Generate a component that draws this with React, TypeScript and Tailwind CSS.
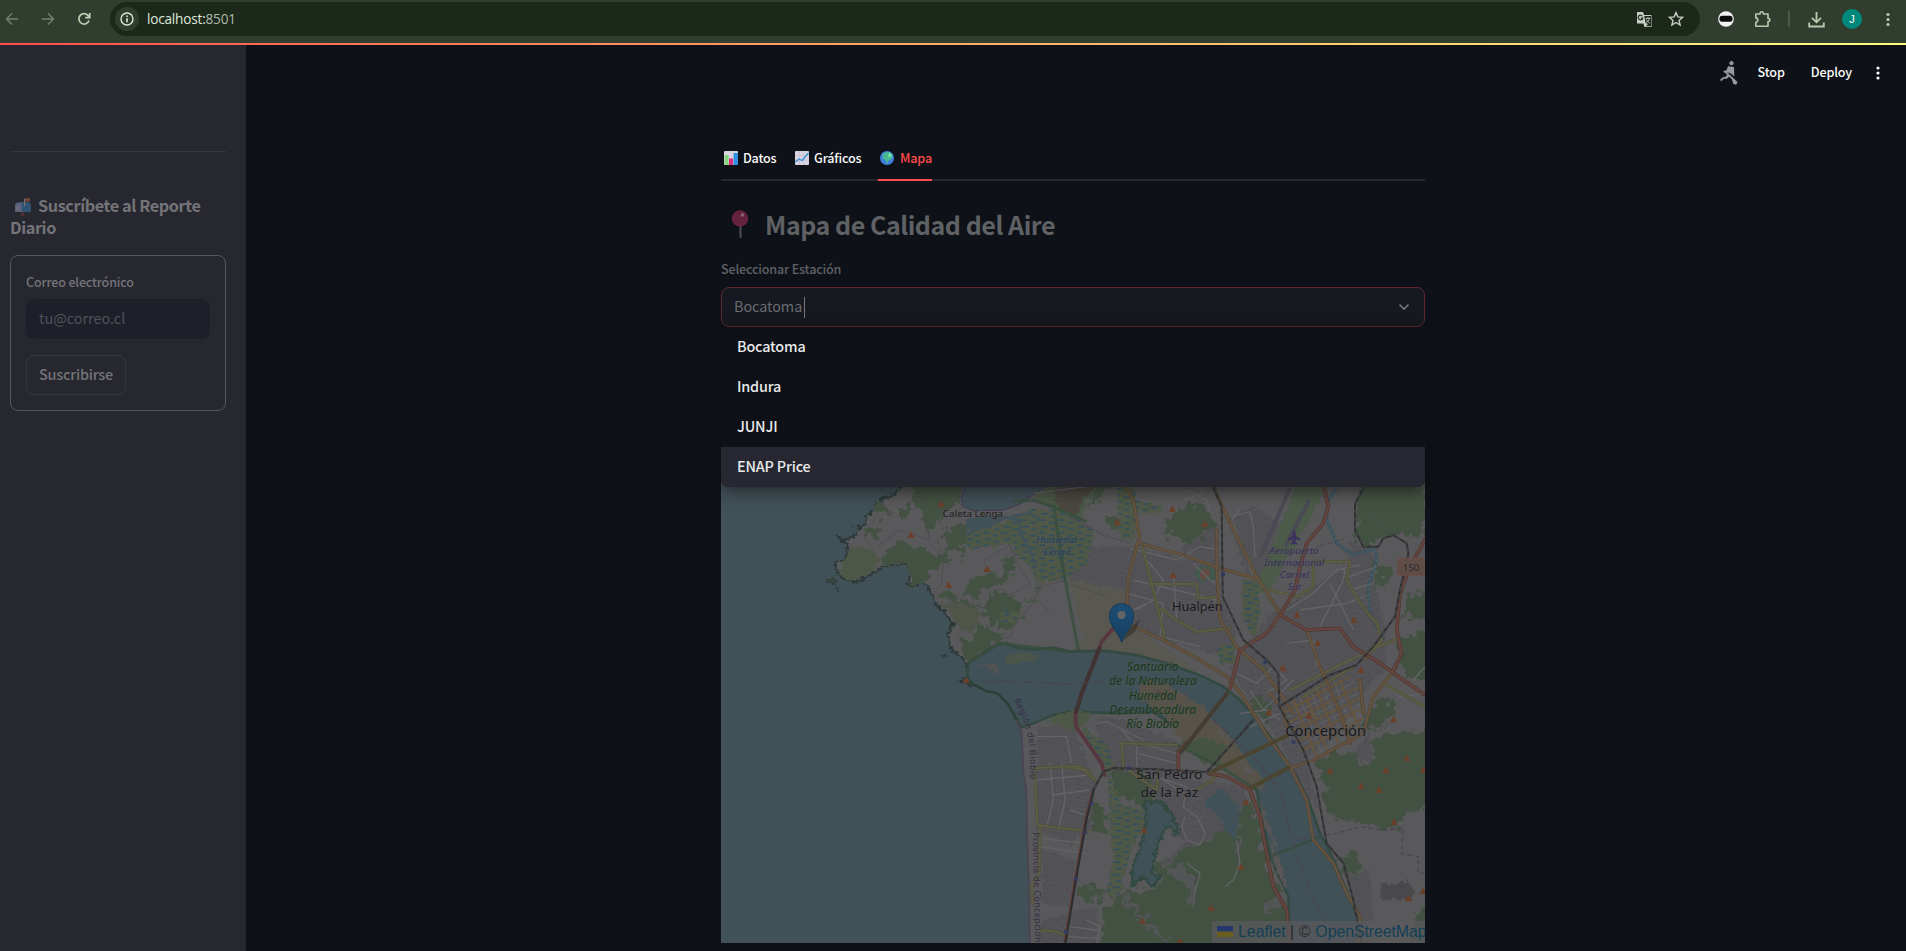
import React from "react";

const SANS = "font-['Noto_Sans_CJK_SC','Noto_Sans',sans-serif]";

type Pt = [number, number];

const PEAKS: Pt[] = [
  [663, 72], [573, 165], [801, 267], [686, 315], [738, 601], [1192, 126], [1357, 87], [1455, 132], [1359, 285],
  [1731, 405], [1902, 420], [1793, 489], [1689, 564], [1923, 570], [1647, 697], [1767, 708], [2021, 718],
  [2060, 834], [1998, 870], [1830, 873], [1923, 918], [1977, 930], [2110, 870], [2022, 1026], [1578, 966],
  [1272, 1050], [1563, 1161], [1473, 1284], [1268, 1323], [1380, 1384], [2066, 1254], [2110, 1233],
];

const FOREST = [
  "M543 10 L735 10 L722 75 L700 70 L690 95 L640 130 L625 165 L612 130 L605 90 L580 60 L590 30Z",
  "M738 120 L740 190 L700 200 L660 180 L690 140Z",
  "M500 215 L540 180 L570 195 L620 200 L650 225 L680 225 L685 245 L650 270 L600 305 L570 318 L575 270 L540 250 L480 262Z",
  "M655 205 L690 195 L735 205 L730 222 L680 222Z",
  "M845 235 L880 232 L885 290 L850 310 L820 285 L855 270Z",
  "M745 320 L775 290 L820 285 L840 310 L790 330 L775 355 L740 345Z",
  "M650 345 L690 335 L710 360 L790 380 L830 330 L880 340 L905 375 L900 430 L850 440 L810 420 L790 390 L720 375Z",
  "M770 440 L810 430 L830 470 L850 460 L835 485 L790 515 L750 540 L725 510 L720 470 L750 490Z",
  "M455 85 L490 70 L510 100 L470 115Z", "M430 150 L475 140 L480 160 L440 170Z", "M530 95 L570 60 L580 80 L545 120Z",
  "M720 235l18 4-6 8z", "M960 310l10 30-12 8z", "M915 350l36 4-4 8-30-2z",
  "M1350 100 L1400 80 L1450 80 L1470 110 L1490 140 L1445 170 L1430 195 L1380 165 L1330 170Z",
  "M1160 110 L1210 100 L1225 140 L1180 150Z",
  "M1140 10 L1180 10 L1150 50 L1100 85Z",
  "M1910 40 L1940 10 L2115 10 L2115 165 L2060 170 L2000 160 L1960 190 L1930 205 L1905 160Z",
  "M1970 250 L2010 270 L1990 330 L1960 300Z",
  "M2060 350 L2130 335 L2130 430 L2080 400 L2050 410Z", "M2030 480 L2130 450 L2130 600 L2060 590 L2040 530Z",
  "M1600 640 L1660 670 L1640 720 L1590 690Z", "M1960 670 L2010 650 L2020 700 L1980 740 L1930 760Z",
  "M1780 850 L1850 820 L1900 800 L1920 860 L1960 840 L1960 790 L2000 740 L2040 760 L2140 740 L2140 970 L2060 1000 L2020 1050 L1960 1040 L1890 1020 L1840 1010 L1800 970 L1830 930Z",
  "M1380 1110 L1470 1080 L1550 1000 L1590 950 L1620 1050 L1640 1150 L1690 1240 L1710 1320 L1710 1420 L1150 1420 L1150 1290 L1220 1220 L1260 1250 L1320 1200 L1300 1140 L1330 1150Z",
  "M1180 870 L1280 880 L1310 960 L1280 1000 L1240 960 L1180 960Z",
  "M1120 980 L1155 980 L1150 1060 L1120 1060Z", "M1080 1220 L1160 1230 L1150 1260 L1070 1250Z",
  "M1860 1130 L1910 1120 L1920 1160 L1900 1190 L1870 1180Z", "M2090 1300 L2130 1250 L2130 1400 L2060 1400Z",
];

const CLEARINGS = [
  "M1550 1010l12 50-8 60-10 0 4-60-8-50z", "M1210 1230l20 20 60 70-8 6-70-60z",
  "M1330 1140l80 40 20 30-10 60-10 0 0-50-60-30z", "M1630 1270l60-20 10 20-60 20z", "M1250 1320l60 20 40 50-10 2-40-40-50-24z",
];

const WETLAND = [
  "M738 150 L800 145 L870 120 L940 85 L1010 90 L1080 120 L1120 150 L1105 250 L1050 290 L1000 300 L950 305 L930 260 L885 225 L880 190 L810 200 L742 210Z",
  "M1190 15 L1240 15 L1250 60 L1330 80 L1320 100 L1250 100 L1240 190 L1200 170Z",
  "M1565 300 L1610 300 L1620 400 L1600 470 L1570 420Z",
  "M1490 500 L1540 490 L1550 550 L1500 555Z",
  "M840 400 L905 395 L880 430 L845 430Z",
  "M1160 790 L1180 850 L1170 890 L1200 970 L1270 990 L1270 1040 L1240 1100 L1220 1160 L1200 1240 L1175 1260 L1160 1230 L1180 1140 L1170 1040Z",
  "M1070 690 L1110 760 L1160 790 L1170 870 L1140 860 L1100 780Z",
];

const URBAN = [
  "M1225 200 L1500 260 L1480 300 L1550 460 L1520 530 L1330 480 L1220 430 L1215 300Z",
  "M1520 110 L1600 80 L1680 130 L1620 290 L1580 280Z",
  "M1380 210 L1490 130 L1500 260Z",
  "M1090 200 L1240 200 L1215 330 L1050 300Z",
  "M1650 400 L1760 340 L1880 250 L1960 300 L1990 420 L2000 560 L1960 600 L1850 770 L1720 860 L1680 780 L1610 700 L1530 560Z",
  "M1890 180 L1960 220 L1950 420 L1880 330Z",
  "M1120 710 L1200 720 L1380 790 L1380 870 L1450 930 L1460 1040 L1400 1090 L1350 1060 L1330 1000 L1270 900 L1160 860Z",
  "M950 740 L1060 740 L1110 870 L1100 960 L1060 1100 L955 1050Z",
  "M965 1110 L1070 1140 L1050 1280 L965 1270Z", "M960 1320 L1130 1280 L1130 1389 L960 1389Z",
  "M1050 900 L1130 900 L1110 1060 L1060 1060Z", "M1420 900 L1570 920 L1590 1000 L1560 1010 L1480 1080 L1420 1150 L1330 1150 L1400 1090Z",
  "M1880 1180 L1950 1170 L1960 1330 L1920 1330Z", "M1990 1210 L2080 1220 L2070 1260 L1990 1260Z",
  "M1890 830 L1950 760 L1960 850Z", "M1640 680 L1700 680 L1760 860 L1800 990 L1770 960 L1700 830Z",
];

const STREETS = [
  "M1230 205 L1370 240 L1440 200 L1500 210", "M1240 300 L1490 360", "M1220 340 L1330 370 L1320 470 L1440 500", "M1280 240 L1330 300 L1300 360 L1250 390",
  "M1360 280 L1370 420 L1450 460", "M1420 250 L1480 310", "M1220 400 L1280 370", "M1440 390 L1510 350 L1480 300",
  "M1530 110 L1590 95 L1600 140 L1605 230", "M1540 130 L1600 290", "M1700 390 L1780 340 L1850 270 L1920 255", "M1740 390 L1880 370 L1930 350",
  "M1800 440 L1870 300 L1880 240", "M1830 310 L1900 450", "M1550 580 L1610 610 L1660 560 L1700 600 L1640 640", "M1590 630 L1630 690 L1720 600",
  "M1700 490 L1780 480 L1790 560", "M1130 730 L1160 725 L1270 780", "M1260 790 L1370 820", "M1255 820 L1370 850", "M1205 750 L1250 800 L1250 860",
  "M1270 880 L1400 920 L1390 980 L1430 1010 L1455 1060 L1440 1095 L1400 1080 L1385 1040 L1395 1010", "M1330 900 L1390 940",
  "M950 770 L1040 770 L1055 850", "M990 850 L1000 960 L980 1040", "M1025 850 L1035 960 L1015 1050", "M950 900 L1110 885", "M995 945 L1110 930",
  "M960 1075 L1100 1090", "M960 1100 L1100 1120", "M1050 990 L1110 1010", "M1550 1080 L1560 1150 L1540 1200 L1515 1220",
  "M1100 1320 L1140 1340 L1130 1389", "M1050 1340 L1130 1350", "M1040 1370 L1130 1375", "M1400 1150 L1440 1180 L1420 1255",
  "M940 40 L1100 20 L1160 15", "M1890 330 L1960 310", "M1970 260 L1890 290 L1860 260",
  "M1400 30 L1460 60 L1470 90", "M1390 60 L1450 40 L1440 15", "M1560 90 L1520 140", "M2080 600 L2115 560", "M1990 610 L2040 650 L2115 640",
  "M1560 700 L1640 690 L1680 720", "M1590 740 L1680 700",
];

const CITY = [
  "M1690 700 L1890 590", "M1700 730 L1920 620", "M1715 755 L1930 650", "M1730 785 L1935 680", "M1740 815 L1930 715",
  "M1720 660 L1790 830", "M1755 640 L1820 810", "M1790 625 L1855 790", "M1825 610 L1885 770", "M1860 600 L1920 750",
];

const CITY_MINOR = [
  "M1695 715 L1905 605", "M1708 742 L1925 635", "M1722 770 L1932 665", "M1735 800 L1932 698",
  "M1738 650 L1805 820", "M1772 632 L1838 800", "M1808 618 L1870 780", "M1842 605 L1902 760",
];

const YELLOW = [
  "M1265 190 L1335 475", "M1290 312 L1430 312 L1435 355 L1495 350", "M1320 385 L1370 420 L1430 455 L1530 445",
  "M1650 330 L1730 350 L1780 320 L1780 245 L1890 245 L1880 300 L1920 370 L1970 430 L1985 480 L1930 540",
  "M1710 630 L1890 540 L2030 475", "M1750 650 L1900 560", "M1990 610 L2115 680", "M1200 790 L1370 795",
  "M1205 795 L1210 860 L1310 930 L1315 870", "M1040 860 L1090 870 L1125 900", "M1430 930 L1480 900 L1480 880",
  "M945 865 L1070 858 L1110 875", "M945 880 L952 1035 L1110 1055", "M960 1040 L958 1180 L935 1220 L938 1270", "M960 1350 L1010 1355 L1040 1370",
];

const ORANGE = [
  "M1210 10 L1240 60 L1258 170 L1250 200 L1225 290 L1218 430 L1330 480 L1440 540 L1520 590 L1570 650 L1600 700",
  "M1475 10 L1540 150 L1610 290 L1680 400", "M1258 190 L1390 225 L1500 265 L1620 298",
  "M1490 150 L1490 270 L1500 420 L1550 500 L1630 570 L1680 640 L1720 700",
  "M1600 700 L1650 780 L1710 860 L1760 960 L1780 1080 L1840 1150 L1880 1240 L1920 1310 L1915 1389",
  "M1760 450 L1800 560 L1870 720 L1890 790", "M2030 560 L1960 650 L1930 760 L1780 840 L1710 865",
  "M1920 600 L1930 700", "M1650 640 L1690 690 L1700 740",
];

const RED = [
  "M1810 10 L1825 80 L1810 130 L1760 190 L1740 260 L1725 330 L1680 405 L1640 460 L1560 510 L1545 570 L1530 625",
  "M1680 405 L1760 450 L1860 445 L1900 500 L1980 550 L2050 600 L2115 645",
  "M2115 180 L2070 260 L2040 340 L2030 450 L2045 520 L2020 570",
  "M1465 880 L1520 890 L1590 930 L1620 1010 L1640 1120 L1660 1220 L1700 1290 L1710 1389",
  "M1375 870 L1375 815 L1405 785",
];

const RAIL = [
  "M1475 10 L1505 80 L1508 350 L1570 480 L1640 540 L1675 580 L1678 680 L1750 810 L1790 920 L1820 1090 L1870 1150 L1900 1260 L1925 1389",
  "M1678 680 L1830 585 L1910 555 L1960 500 L2025 410 L2040 330 L2065 220 L2060 190 L2020 165 L1990 175 L1975 200 L1930 200 L1905 150 L1905 70 L1940 10",
  "M1050 1300 L1070 1180 L1100 1010 L1120 930 L1150 875 L1180 864 L1300 868 L1460 876 L1600 720",
];

const STOPS: Pt[] = [[1509, 282], [1635, 546], [1720, 785], [1224, 864], [1113, 970], [1095, 1056], [1068, 1196], [1037, 1355]];

function Label({ x, y, w, size, fill, children, italic }: { x: number; y: number; w: number; size: number; fill: string; children: string; italic?: boolean }) {
  const common = { x: x - w / 2, y, textLength: w, lengthAdjust: "spacingAndGlyphs" as const, fontSize: size, fontStyle: italic ? "italic" : "normal" };
  return (
    <text {...common} fill={fill} stroke="#5b5b5d" strokeOpacity={0.4} strokeWidth={4} strokeLinejoin="round" style={{ paintOrder: "stroke" }}>
      {children}
    </text>
  );
}

function StationMap() {
  return (
    <svg viewBox="3 -411 2112 1800" className="block h-[600px] w-[704px]" fontFamily="'Noto Sans', sans-serif" fill="none">
      <defs>
        <filter id="rough" x="-5%" y="-5%" width="110%" height="110%" colorInterpolationFilters="sRGB">
          <feTurbulence type="fractalNoise" baseFrequency="0.07" numOctaves={3} seed={4} />
          <feDisplacementMap in="SourceGraphic" scale={24} xChannelSelector="R" yChannelSelector="G" />
        </filter>
        <filter id="ragged" x="-5%" y="-5%" width="110%" height="110%" colorInterpolationFilters="sRGB">
          <feTurbulence type="fractalNoise" baseFrequency="0.035" numOctaves={4} seed={9} />
          <feDisplacementMap in="SourceGraphic" scale={60} xChannelSelector="R" yChannelSelector="G" />
        </filter>
        <pattern id="marsh" width="56" height="38" patternUnits="userSpaceOnUse">
          <path d="M4 6h20M34 14h18M12 26h18M40 34h14" stroke="#264a69" strokeWidth={3.5} />
        </pattern>
        <pattern id="blocks" width="34" height="26" patternUnits="userSpaceOnUse" patternTransform="rotate(12)">
          <path d="M0 0H34M0 13H34M10 0V13M24 13V26M34 0V26" stroke="#58585c" strokeWidth={1.6} />
        </pattern>
        <linearGradient id="pin" x1="0" y1="0" x2="0" y2="1">
          <stop offset="0" stopColor="#1c4d75" /><stop offset="1" stopColor="#173f62" />
        </linearGradient>
      </defs>
      <rect x="3" y="-411" width="2112" height="1800" fill="#415158" />
      <g filter="url(#rough)">
        <path d="M543 -411 L543 25 L520 45 L490 55 L465 70 L470 90 L440 105 L435 130 L410 150 L400 172 L375 178 L350 168 L378 190 L385 205 L375 235 L345 250 L352 275 L365 295 L400 308 L425 300 L450 285 L490 260 L530 252 L560 250 L578 270 L572 290 L560 310 L575 318 L605 305 L625 320 L635 345 L650 375 L680 405 L700 430 L685 460 L690 490 L700 515 L730 535 L742 560 L742 590 L720 603 L750 614 L1000 620 L1000 1400 L2140 1400 L2140 -411Z"
          fill="#59595b" stroke="#2c3938" strokeWidth={7} />
        <path d="M322 300l15-10 18 10-8 14-18-4zM350 324l8-2 2 7-7 3zM666 523l14 2-6 10zM395 134l6 3-5 4z" fill="#36453f" stroke="#2e3b3a" strokeWidth={3} />
        <path d="M395 200 L450 205 L480 240 L450 282 L400 304 L360 285 L365 255Z" fill="#4d5747" />
        <path d="M660 370 L730 365 L778 385 L775 430 L750 460 L715 440 L690 400Z" fill="#4f5548" />
        <path d="M1050 300 L1215 330 L1220 430 L1330 500 L1450 590 L1150 510 L1050 517 L1090 480Z" fill="#585750" />
      </g>
      <path d="M750 609 L800 634 L832 640 L862 670 L890 720 L905 762 L910 880 L919 930 L921 1060 L926 1200 L929 1400 L1040 1400 L1040 609Z" fill="#59595b" />
      <g filter="url(#rough)">{URBAN.map((d) => <path key={d} d={d} fill="#515155" />)}</g>
      {URBAN.map((d) => <path key={d} d={d} fill="url(#blocks)" />)}
      <g filter="url(#ragged)">
        {FOREST.map((d) => <path key={d} d={d} fill="#435142" />)}
        {CLEARINGS.map((d) => <path key={d} d={d} fill="#535556" />)}
      </g>
      <g filter="url(#rough)">
        {WETLAND.map((d) => <path key={d} d={d} fill="#4f5846" />)}
        <path d="M980 15 L1140 15 L1100 60 L1080 120 L1010 90 L940 55Z" fill="#4b5847" />
        <path d="M1005 30 L1030 15 L1130 15 L1090 60 L1070 105 L1030 95 L1003 65Z" fill="#4b4740" />
        <path d="M1730 15 L1820 15 L1740 170 L1650 330 L1600 350 L1620 290Z" fill="#4b5a49" />
        <path d="M1980 1210 L2030 1215 L2060 1200 L2085 1240 L2070 1260 L1980 1255Z" fill="#49494c" />
        <path d="M1430 260 L1480 265 L1490 300 L1440 305 L1425 285Z" fill="#41584d" />
        <path d="M1438 275 L1465 268 L1468 292 L1445 298Z" fill="#654b42" />
      </g>
      {WETLAND.map((d) => <path key={d} d={d} fill="url(#marsh)" />)}
      <path d="M740 165 L800 128 L860 112 L900 122 L900 160 L930 210 L950 265 M870 110 L930 100 L960 120" stroke="#415158" strokeWidth={9} strokeLinejoin="round" />
      <path d="M738 10 L725 50 L728 78 L760 92 L850 90 L900 72 L990 10Z" fill="#415158" stroke="#453f55" strokeWidth={4} />
      <path d="M738 118 L800 108 L870 112 L800 145 L738 150Z" fill="#415158" />
      <path d="M1860 10 L1825 60 L1820 120 L1850 190 L1900 225 L1965 205 L1970 240 L1945 320 L1950 400 L1990 480" stroke="#3e525c" strokeWidth={10} />
      <path d="M1860 10 L1825 60 L1820 120 L1850 190 L1900 225 L1965 205 L1970 240 L1945 320 L1950 400 L1990 480" stroke="#526373" strokeWidth={3} strokeDasharray="7 8" />

      <path d="M745 548 L790 520 L830 495 L860 490 L890 503 L940 508 L1000 503 L1050 515 L1150 512 L1250 525 L1350 553 L1450 590 L1510 620 L1560 660 L1605 710 L1650 770 L1697 840 L1725 880 L1765 960 L1800 1060 L1822 1100 L1850 1160 L1870 1210 L1900 1280 L1920 1330 L1920 1400 L1710 1400 L1705 1250 L1650 1130 L1610 930 L1560 880 L1480 820 L1390 760 L1300 695 L1200 700 L1050 695 L1000 705 L940 730 L903 742 L890 715 L862 668 L832 640 L800 634 L760 612 L742 590Z"
        fill="#415158" stroke="#334a42" strokeWidth={8} />
      <g filter="url(#rough)">
        <path d="M1270 600 L1340 610 L1400 650 L1450 680 L1500 740 L1540 780 L1600 850 L1640 930 L1590 925 L1500 860 L1400 800 L1320 700 L1250 650Z" fill="#57534a" />
        <path d="M1380 790 L1450 770 L1520 800 L1500 850 L1450 850Z" fill="#455342" />
        <path d="M850 530 L900 515 L960 530 L930 545 L860 555Z" fill="#4b5549" />
        <path d="M770 550 L830 555 L840 580 L800 565Z" fill="#535354" />
        <path d="M1555 830 l45 50 l-8 6 l-40 -44zM1620 960l20 60l35 80l-8 4l-40-90zM1650 1080l30 60l20 80l-8 2l-32-80zM1500 750l30 26-5 6-30-24z" fill="#5a5655" />
        <path d="M1470 950 L1500 925 L1535 950 L1560 990 L1545 1080 L1525 1060 L1490 1000 L1450 970Z" fill="#415158" />
        <path d="M980 725 L1010 705 L1060 690 L1110 700 L1100 730 L1060 750 L1020 735Z" fill="#4c5746" />
      </g>
      <path d="M1490 690 L1590 715 L1690 850 L1600 870 L1540 780Z" fill="#415158" />
      <g filter="url(#rough)">
        <path d="M1275 965 L1320 965 L1355 1000 L1378 1060 L1340 1040 L1320 1080 L1305 1120 L1295 1180 L1320 1190 L1300 1220 L1265 1190 L1240 1220 L1235 1160 L1260 1110 L1278 1030Z" fill="#415158" stroke="#334a42" strokeWidth={9} strokeLinejoin="round" />
      </g>
      <path d="M850 370l14 28 6 10-14-4z" fill="#415158" />

      <g stroke="#49494c" strokeWidth={2}>
        <path d="M630 190 L670 230 L665 310 L640 345 M690 345 L790 385 L840 325 L870 345 L930 310 L900 265 L870 195 L800 235 L790 255 M745 545 L840 480 L875 465 L880 440 L940 370 L960 320 L1040 300 M960 365 L990 400 M605 20 L610 100 L630 180 L540 150 L470 200 M430 170 L465 215" />
        <path d="M2000 160 L1940 90 M1000 295 L1160 350" />
      </g>
      <g stroke="#374e3d" strokeWidth={9} opacity={0.8}>
        <path d="M742 548 L840 490 L940 502 L1050 515 M1000 70 L1030 270 L1075 510 M880 65 L940 60 L1010 85 L1100 125" />
        <path d="M1650 1130 L1800 1070 M1360 790 L1500 860 L1610 930" />
      </g>
      <g stroke="#646467" strokeWidth={4} strokeLinejoin="round">{STREETS.map((d) => <path key={d} d={d} />)}</g>
      <g stroke="#626265" strokeWidth={3}>{CITY_MINOR.map((d) => <path key={d} d={d} />)}</g>
      <g stroke="#65553c" strokeWidth={6}>{CITY.map((d) => <path key={d} d={d} />)}</g>
      <g strokeLinejoin="round" strokeLinecap="round">
        {YELLOW.map((d) => <path key={d} d={d} stroke="#4c4c36" strokeWidth={9} />)}
        {YELLOW.map((d) => <path key={d + "i"} d={d} stroke="#5d5d46" strokeWidth={6} />)}
        {ORANGE.map((d) => <path key={d} d={d} stroke="#504230" strokeWidth={10} />)}
        {ORANGE.map((d) => <path key={d + "i"} d={d} stroke="#635340" strokeWidth={7} />)}
        {RED.map((d) => <path key={d} d={d} stroke="#50332f" strokeWidth={11} />)}
        {RED.map((d) => <path key={d + "i"} d={d} stroke="#644640" strokeWidth={7} />)}
      </g>
      <path d="M1465 880 L1705 765 M1590 925 L1710 860" stroke="#4b452f" strokeWidth={12} />
      <path d="M1380 820 L1525 635" stroke="#433c32" strokeWidth={12} />
      <path d="M1710 25 L1620 230 M1768 60 L1695 200" stroke="#4a4a55" strokeWidth={11} />
      <path d="M1230 440 L1180 445 L1145 485 L1125 540 L1085 640 L1066 700 L1068 740 L1110 800 L1145 850 L1155 890" stroke="#58363f" strokeWidth={11} strokeLinejoin="round" />
      <path d="M1140 500 L1085 640 L1067 700" stroke="#403331" strokeWidth={12} />
      {RAIL.map((d) => <path key={d} d={d} stroke="#2f2f32" strokeWidth={6} />)}
      {RAIL.map((d) => <path key={d + "i"} d={d} stroke="#57575a" strokeWidth={2} strokeDasharray="12 12" />)}
      <path d="M1120 930 L1100 1010 L1070 1180 L1035 1389" stroke="#2f2f32" strokeWidth={9} />
      <path d="M1116 930 L1096 1010 L1066 1180 L1031 1389" stroke="#6a4038" strokeWidth={3} />
      <path d="M748 608 L800 634 L832 640 L862 670 L890 720" stroke="#2f3d38" strokeWidth={6} strokeLinejoin="round" />
      <g stroke="#4a4453" strokeWidth={4}>
        <path d="M790 605 L850 603 L1050 612 L1150 604 M1310 630 L1400 690 M1480 720 L1600 830 L1680 930 L1710 1060 L1760 1210 L1810 1320" strokeDasharray="22 7 5 7" />
        <path d="M1730 1080 L1850 1060 L1920 1040 L1990 1050 L2050 1045 L2045 1120 L2095 1130 L2095 1180 L2115 1180" strokeDasharray="14 8" />
        <path d="M1050 110 L1150 165 L1230 190 M1790 200 L1870 178" strokeDasharray="6 5" />
        <path d="M890 720 L905 762 L910 880 L919 930 L921 1060 L926 1200 L929 1389" strokeWidth={6} />
      </g>
      {STOPS.map(([x, y]) => <rect key={`${x}`} x={x - 5} y={y - 5} width={11} height={11} fill="#343a5e" />)}
      {PEAKS.map(([x, y]) => <path key={`${x}-${y}`} d={`M${x} ${y - 11}L${x + 11} ${y + 9}H${x - 11}Z`} fill="#693f29" />)}

      <rect x="2033" y="236" width="80" height="50" rx="5" fill="#604c47" stroke="#6d4b45" strokeWidth={3} />
      <Label x={2073} y={272} w={50} size={27} fill="#2c2523">150</Label>
      <path d="M1722 152c4 0 5 5 5 10v6l14 9v5l-14-4v8l5 4v4l-10-3-10 3v-4l5-4v-8l-14 4v-5l14-9v-6c0-5 1-10 5-10z" fill="#3c3260" />
      <Label x={759} y={110} w={181} size={29} fill="#1e1e20">Caleta Lenga</Label>
      <Label x={1010} y={189} w={122} size={29} fill="#1c3e60" italic>Humedal</Label>
      <Label x={1012} y={224} w={80} size={29} fill="#1c3e60" italic>Lenga</Label>
      <Label x={1722} y={222} w={148} size={27} fill="#352d5a" italic>Aeropuerto</Label>
      <Label x={1723} y={258} w={180} size={27} fill="#352d5a" italic>Internacional</Label>
      <Label x={1723} y={294} w={88} size={27} fill="#352d5a" italic>Carriel</Label>
      <Label x={1724} y={330} w={42} size={27} fill="#352d5a" italic>Sur</Label>
      <Label x={1432} y={393} w={152} size={39} fill="#19191c">Hualpén</Label>
      <Label x={1298} y={574} w={154} size={36} fill="#133818" italic>Santuario</Label>
      <Label x={1299} y={616} w={262} size={36} fill="#133818" italic>de la Naturaleza</Label>
      <Label x={1298} y={659} w={144} size={36} fill="#133818" italic>Humedal</Label>
      <Label x={1298} y={702} w={260} size={36} fill="#133818" italic>Desembocadura</Label>
      <Label x={1298} y={745} w={158} size={36} fill="#133818" italic>Río Biobío</Label>
      <Label x={1817} y={768} w={243} size={41} fill="#19191c">Concepción</Label>
      <Label x={1348} y={897} w={199} size={40} fill="#19191c">San Pedro</Label>
      <Label x={1348} y={952} w={173} size={40} fill="#19191c">de la Paz</Label>
      <path id="regionPath" d="M880 662 C915 715 928 770 929 830 L929 910" />
      <text fontSize={27} fill="#362e42"><textPath href="#regionPath" textLength={245}>Región del Biobío</textPath></text>
      <path id="provPath" d="M938 1057 C940 1150 944 1250 945 1395" />
      <text fontSize={27} fill="#362e42"><textPath href="#provPath" textLength={331}>Provincia de Concepción</textPath></text>

      <path d="M1207 483 L1225 450 L1262 415 L1245 455Z" fill="#000" opacity={0.28} />
      <path d="M1205 487 C1197 458 1168 440 1168 407 A36.500 36.500 0 0 1 1241 407 C1241 440 1213 458 1205 487Z" fill="url(#pin)" stroke="#163a59" strokeWidth={3} />
      <circle cx="1204.500" cy="405" r="12" fill="#656567" />

      <rect x="1476" y="1323" width="640" height="66" fill="#5a5a5d" opacity={0.72} />
      <path d="M1491 1338h48v17h-48z" fill="#26386b" /><path d="M1491 1355h48v16h-48z" fill="#6b5d1d" />
      <g fontFamily="'Liberation Sans', sans-serif" fontSize={48}>
        <text x="1554" y="1371" textLength="143" fill="#143f56">Leaflet</text>
        <text x="1710" y="1371" fill="#29292b">|</text>
        <text x="1736" y="1371" fill="#29292b">©</text>
        <text x="1786" y="1371" textLength="334" fill="#143f56">OpenStreetMap</text>
      </g>
    </svg>
  );
}

function Dots({ className }: { className: string }) {
  return (
    <svg viewBox="0 0 4 14" className={className} fill="currentColor">
      <circle cx="2" cy="2" r="1.600" /><circle cx="2" cy="7" r="1.600" /><circle cx="2" cy="12" r="1.600" />
    </svg>
  );
}

function BrowserBar() {
  return (
    <header className="flex h-[43px] items-start bg-[#313e2f] pt-[2px] text-[#b5cbb0]">
      <div className="flex h-[34px] w-[110px] shrink-0 items-center">
        <svg viewBox="0 0 14 14" className="ml-[5px] size-[14px]" fill="none" stroke="#71806d" strokeWidth="1.500"><path d="M13 7H2M7 1.500L1.500 7 7 12.500" /></svg>
        <svg viewBox="0 0 14 14" className="ml-[22px] size-[14px]" fill="none" stroke="#71806d" strokeWidth="1.500"><path d="M1 7h11M7 1.500L12.500 7 7 12.500" /></svg>
        <svg viewBox="0 0 14 14" className="ml-[22px] size-[14px]" fill="none" stroke="#bdd3b8" strokeWidth="1.700"><path d="M12 8.500A5.200 5.200 0 1 1 11.200 3.700L12.500 5.200M12.700 1v4.600H8.200" /></svg>
      </div>
      <div className="flex h-[34px] w-[1590px] items-center rounded-full bg-[#1c281a] pl-[5px]">
        <span className="flex size-6 items-center justify-center rounded-full bg-[#313e2f]">
          <svg viewBox="0 0 14 14" className="size-[14px]" fill="none" stroke="#dce7d9" strokeWidth="1.400"><circle cx="7" cy="7" r="6" /><path d="M7 6.200v4M7 3.500v1.500" strokeWidth="1.600" /></svg>
        </span>
        <span className="ml-2 flex-1 font-['Open_Sans',sans-serif] text-[13.600px] leading-5 tracking-[-0.200px] text-[#dfe8dc]">
          localhost:<span className="text-[#aebcaa]">8501</span>
        </span>
        <svg viewBox="0 0 17 17" className="size-[17px]" fill="none">
          <path d="M1 1h6l1 3h7.500v12H8.500L7.300 12.500H1z" fill="#c9cfc7" />
          <path d="M8.300 5H15v10.300H9.800L12 13 9.500 12z" fill="#1c281a" />
          <path d="M6.500 5.300A2.300 2.300 0 1 0 6.800 7H4.700" stroke="#1c281a" strokeWidth="1.200" />
          <path d="M9.500 7.300h5M12 6v1.300M13.500 7.500c-.5 2-1.800 3.300-3.300 4M10.300 8.300c.6 1.500 2 3 3.700 4" stroke="#c9cfc7" strokeWidth=".9" />
        </svg>
        <svg viewBox="0 0 16 16" className="ml-[15px] mr-[16px] size-4" fill="none" stroke="#c9cfc7" strokeWidth="1.400"><path d="M8 1.600l1.900 4.300 4.600.4-3.500 3.100 1.100 4.600L8 11.500 3.900 14 5 9.400 1.500 6.300l4.600-.4z" /></svg>
      </div>
      <div className="flex h-[34px] flex-1 items-center">
        <svg viewBox="0 0 16 16" className="ml-[18px] size-4"><circle cx="8" cy="8" r="7.800" fill="#f2f2f4" /><rect x="1.500" y="4.800" width="13" height="6" rx="2.500" fill="#0b0d0b" /></svg>
        <svg viewBox="0 0 17 17" className="ml-[20px] size-[17px]" fill="none" stroke="#b5cbb0" strokeWidth="1.600"><path d="M1.800 3h4.200v-.5a1.700 1.700 0 0 1 3.400 0V3H14v4.400h.3a1.600 1.600 0 0 1 0 3.200H14V15.200H1.800v-4c2.700-.3 2.700-4 0-4.300z" strokeLinejoin="round" /></svg>
        <span className="ml-[17px] h-4 w-[2px] bg-[#4a5c47]" />
        <svg viewBox="0 0 17 17" className="ml-[18px] size-[17px]" fill="none" stroke="#b5cbb0" strokeWidth="1.800"><path d="M8.500 1v10M4 6.800l4.500 4.500L13 6.800M1.200 11.500v4h14.600v-4" /></svg>
        <span className="ml-[17px] flex size-5 items-center justify-center rounded-full bg-[#00897b] font-['Liberation_Sans',sans-serif] text-[11px] leading-5 text-white">J</span>
        <Dots className="ml-[24px] h-[15px] w-[4px]" />
      </div>
    </header>
  );
}

function Sidebar() {
  return (
    <aside className="w-[246px] shrink-0 bg-[#272730] pl-[10px] pr-5 pt-[106px]">
      <div className="h-px bg-[#35353d]" />
      <h3 className="mt-[42px] text-[16.300px] font-bold leading-[22px] tracking-[-0.420px] text-[#747478]">
        <svg viewBox="0 0 17 18" className="ml-[4px] mr-[7px] inline-block h-[18px] w-[17px] align-[-4px]">
          <path d="M7 11h3v7H7z" fill="#4d3038" /><path d="M5 4h8a4 4 0 0 1 4 4v6H3z" fill="#315273" /><path d="M1 8a3.500 3.500 0 0 1 7 0v6H1z" fill="#58607b" /><path d="M2 8.500h4v4H2z" fill="#6e6a7a" /><path d="M10 1h1.200v7H10z" fill="#77727a" /><path d="M11 0h5v3.500h-5z" fill="#70433b" />
        </svg>
        Suscríbete al Reporte Diario
      </h3>
      <form className="mt-[17px] flex h-[156px] flex-col items-start rounded-lg border border-[#56565e] px-[15px] pt-[16px]">
        <label className="text-[12.500px] font-medium leading-5 tracking-[-0.150px] text-[#747478]">Correo electrónico</label>
        <div className="mt-[7px] flex h-10 w-full items-center rounded-lg bg-[#1e2029] pb-[2px] pl-[13px] text-[14.400px] leading-5 text-[#515159]">tu@correo.cl</div>
        <button type="button" className="mt-4 h-10 w-[100px] rounded-lg border border-[#36363e] pb-[2px] text-[14.400px] font-medium leading-5 tracking-[-0.180px] text-[#747478]">Suscribirse</button>
      </form>
    </aside>
  );
}

function Tabs() {
  return (
    <nav className="flex h-[38px] items-start border-b-2 border-[#262730] text-[12.600px] font-medium leading-[30px] tracking-[-0.180px] text-[#fafafa]">
      <span className="flex w-[71px] items-center pl-[3px]">
        <svg viewBox="0 0 14 14" className="mr-[5px] size-[14px]"><rect width="14" height="14" rx="1" fill="#d9d3e2" /><path d="M.5 4h4v10h-4z" fill="#86d67b" /><path d="M5 7.500h4V14H5z" fill="#db2d7c" /><path d="M9.500 2H14v12H9.500z" fill="#2f8fe0" /></svg>
        Datos
      </span>
      <span className="flex w-[86px] items-center pl-[3px]">
        <svg viewBox="0 0 14 14" className="mr-[5px] size-[14px]"><rect width="14" height="14" rx="1" fill="#d9d3e2" /><path d="M0 4.500h14M0 9h14M4.500 0v14M9 0v14" stroke="#c1b8d0" strokeWidth=".6" /><path d="M.5 11L4 8l3 1.500L13.500 2" fill="none" stroke="#2f8fd0" strokeWidth="1.300" /></svg>
        Gráficos
      </span>
      <span className="flex h-[38px] w-[54px] items-start border-b-2 border-[#ff4b4b] pl-[2px] text-[#ff4b4b]">
        <svg viewBox="0 0 14 14" className="mr-[6px] mt-[8px] size-[14px] shrink-0"><circle cx="7" cy="7" r="7" fill="#3f7fdd" /><path d="M3 2.500L7 1l4 1 2 3-1.500 3-3 1.500L7.500 13 5.500 9 2.500 7.500z" fill="#4bb890" /><path d="M9 1.500l3 2.500-2 2.500-2-1z" fill="#6de8a7" /></svg>
        Mapa
      </span>
    </nav>
  );
}

const OPTIONS = ["Bocatoma", "Indura", "JUNJI", "ENAP Price"];

function StationSelect() {
  return (
    <div className="relative">
      <div className="flex h-10 items-center rounded-lg border border-[#602830] bg-[#16191f] pl-[12px] pr-[14px]">
        <span className="pb-[2px] text-[14.400px] leading-5 tracking-[-0.050px] text-[#6a6c71]">Bocatoma</span>
        <span className="ml-[2px] h-[21px] w-px bg-[#76777a]" />
        <svg viewBox="0 0 12 8" className="ml-auto h-2 w-3" fill="none" stroke="#76777a" strokeWidth="1.600"><path d="M1.500 1.500L6 6l4.500-4.500" /></svg>
      </div>
      <ul className="absolute left-0 top-10 z-10 w-[704px] overflow-hidden rounded-b-lg bg-[#0e1117] shadow-[0_4px_16px_rgba(14,14,14,0.6)]">
        {OPTIONS.map((o) => (
          <li key={o} className={`h-10 pl-4 text-[14.400px] font-medium leading-[38px] tracking-[-0.180px] text-[#e8e9ea] ${o === "ENAP Price" ? "bg-[#262730]" : ""}`}>{o}</li>
        ))}
      </ul>
    </div>
  );
}

export default function App() {
  return (
    <div className={`flex h-[951px] w-[1906px] flex-col overflow-hidden bg-[#0e1117] ${SANS}`}>
      <BrowserBar />
      <div className="h-[2px] shrink-0 bg-gradient-to-r from-[#ff4b4b] to-[#fffd80]" />
      <div className="flex min-h-0 flex-1">
        <Sidebar />
        <main className="flex min-w-0 flex-1 flex-col">
          <div className="flex h-14 shrink-0 items-center justify-end pr-[26px] text-[12.600px] font-medium leading-5 tracking-[-0.150px] text-[#fafafa]">
            <svg viewBox="0 0 18 24" className="mr-[20px] h-6 w-[18px]" fill="#97989b">
              <circle cx="11.500" cy="2.200" r="2.100" />
              <path d="M8 5.200L14 6 14.300 15.500 11 12.500 7.800 11.500 4.800 11.800 3 10.600 6.500 9.200z" />
              <path d="M3.800 10.400L5 9.300 13.500 17.300 17.500 21 16.200 23.800 13.200 23 12 18.600z" />
              <path d="M7 13.500l2.500 2-3 2.500-2.200-.5-3 2.800L0 18.800 3.500 15.800l2 .3z" />
            </svg>
            <span className="pb-[2px]">Stop</span>
            <span className="ml-[26px] pb-[2px]">Deploy</span>
            <Dots className="ml-[24px] h-[14px] w-[4px]" />
          </div>
          <div className="ml-[475px] flex w-[704px] flex-col pt-[42px]">
            <Tabs />
            <h2 className="mt-[23px] flex h-10 items-center text-[25px] font-bold leading-10 tracking-[-0.450px] text-[#5f6165]">
              <svg viewBox="0 0 18 28" className="ml-[10px] mr-[16px] h-7 w-[18px]"><path d="M8.500 14h2v14h-2z" fill="#4e4d54" /><circle cx="9" cy="8.500" r="8.300" fill="#64223c" /><circle cx="11.500" cy="5" r="1.800" fill="#8a6074" /></svg>
              Mapa de Calidad del Aire
            </h2>
            <div className="mt-[13px] h-[30px] text-[12.600px] font-medium leading-6 tracking-[-0.180px] text-[#5f6165]">Seleccionar Estación</div>
            <StationSelect />
            <div className="mt-4"><StationMap /></div>
          </div>
        </main>
      </div>
    </div>
  );
}
